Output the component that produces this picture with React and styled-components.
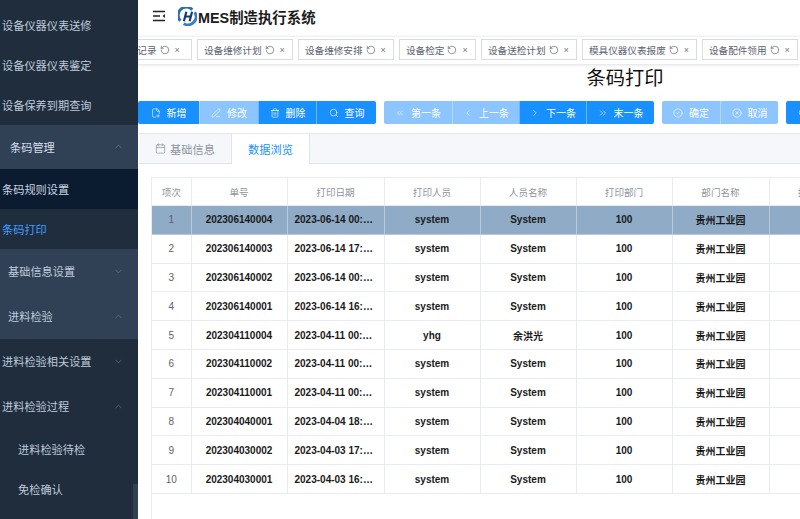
import React from "react";
import styled, { createGlobalStyle } from "styled-components";
import {
  FilePlus2, PenLine, Trash2, Search, ChevronsLeft, ChevronLeft, ChevronRight, ChevronsRight,
  CircleCheck, CircleX, RotateCw, ChevronUp, ChevronDown, Calendar,
} from "lucide-react";

const Global = createGlobalStyle`
  html, body { margin: 0; padding: 0; width: 800px; height: 519px; overflow: hidden; background: #fff; }
  * { box-sizing: border-box; }
  body { font-family: "Liberation Sans", "Noto Sans CJK SC", sans-serif; }
`;

const Page = styled.div`
  display: flex;
  width: 800px;
  height: 519px;
  overflow: hidden;
`;

const Sidebar = styled.aside`
  position: relative;
  flex: 0 0 138px;
  padding-top: 5px;
  background: #1f2d3d;
  overflow: hidden;
`;

const MenuItem = styled.div`
  display: flex;
  align-items: center;
  justify-content: space-between;
  height: ${(p) => p.$h || 40}px;
  padding: 0 14px 1px ${(p) => p.$indent || 2}px;
  font-size: 11.2px;
  color: ${(p) => p.$color || "#bfcbd9"};
  background: ${(p) => p.$bg || "transparent"};
  white-space: nowrap;
  svg { color: #7f8b9a; }
`;

const ScrollThumb = styled.div`
  position: absolute;
  right: 0;
  top: 484px;
  width: 5px;
  height: 35px;
  background: #33404f;
`;

const Main = styled.main`
  flex: 1;
  min-width: 0;
  display: flex;
  flex-direction: column;
  overflow: hidden;
`;

const Header = styled.header`
  flex: 0 0 36px;
  display: flex;
  align-items: center;
  padding: 0 0 4px 14px;
  background: #fff;
`;

const Brand = styled.div`
  display: flex;
  align-items: center;
  margin-left: 12px;
  gap: 1px;
  font-size: 14.4px;
  font-weight: 700;
  color: #1c1c1c;
`;

const TagBar = styled.div`
  flex: 0 0 28px;
  display: flex;
  justify-content: flex-end;
  align-items: flex-start;
  gap: 5px;
  padding: 2px 2px 0 0;
  overflow: hidden;
  background: #fff;
  border-top: 1px solid #f0f1f4;
  box-shadow: 0 1px 3px rgba(0, 21, 41, 0.14);
  position: relative;
`;

const Tag = styled.div`
  flex: 0 0 ${(p) => p.$w}px;
  height: 21px;
  display: flex;
  align-items: center;
  gap: 3px;
  padding-left: 6px;
  border: 1px solid #d8dce5;
  font-size: 9.6px;
  color: #5a6270;
  white-space: nowrap;
  svg { color: #555; }
  small { font-size: 9px; color: #777; margin-left: 2px; }
`;

const Canvas = styled.div`
  width: 974px;
  flex: 1;
  min-height: 0;
  display: flex;
  flex-direction: column;
`;

const Title = styled.h1`
  margin: 0;
  height: 37px;
  padding-top: 1px;
  text-align: center;
  font-size: 19.3px;
  line-height: 28px;
  font-weight: 400;
  color: #111;
`;

const Toolbar = styled.div`
  display: flex;
  height: 23px;
  gap: 8px;
`;

const Group = styled.div`
  display: flex;
  border-radius: 2px;
  overflow: hidden;
`;

const Btn = styled.div`
  flex: 0 0 ${(p) => p.$w}px;
  display: flex;
  align-items: center;
  justify-content: center;
  gap: 6px;
  font-size: 10px;
  color: #fff;
  background: ${(p) => (p.$off ? "#8cc5ff" : "#1890ff")};
  border-left: 1px solid rgba(255, 255, 255, 0.35);
  white-space: nowrap;
  &:first-child { border-left: none; }
`;

const Tabs = styled.div`
  margin: 9px 0 0 1px;
  display: flex;
  height: 31px;
  background: #f5f7fa;
  border-top: 1px solid #e4e7ed;
  border-bottom: 1px solid #dfe4ed;
`;

const TabItem = styled.div`
  flex: 0 0 ${(p) => p.$w}px;
  display: flex;
  align-items: center;
  justify-content: center;
  gap: 4px;
  font-size: 11.2px;
  color: ${(p) => (p.$active ? "#1890ff" : "#8f959e")};
  background: ${(p) => (p.$active ? "#fff" : "transparent")};
  height: ${(p) => (p.$active ? "30px" : "auto")};
  border-right: ${(p) => (p.$active ? "1px solid #dfe4ed" : "none")};
  border-left: ${(p) => (p.$active ? "1px solid #dfe4ed" : "none")};
`;

const TableWrap = styled.div`
  margin: 13px 0 0 13px;
  border-left: 1px solid #e8ebf0;
  flex: 1;
`;

const Table = styled.table`
  border-collapse: collapse;
  table-layout: fixed;
  width: 713px;
  font-size: 10px;
`;

const Th = styled.th`
  height: 28px;
  border: 1px solid #e8ebf0;
  border-left: ${(p) => (p.$first ? "none" : "1px solid #e8ebf0")};
  font-weight: 400;
  font-size: 9.6px;
  color: #8f959e;
  text-align: center;
  padding: 0;
  white-space: nowrap;
  overflow: hidden;
`;

const Row = styled.tr`
  background: ${(p) => (p.$selected ? "#8fabc6" : "#fff")};
`;

const Td = styled.td`
  height: 28.8px;
  border: 1px solid ${(p) => (p.$selected ? "#b9cadb" : "#e8ebf0")};
  border-left: ${(p) => (p.$first ? "none" : undefined)};
  font-weight: ${(p) => (p.$plain ? 400 : 700)};
  color: ${(p) => (p.$plain ? "#606266" : "#1a1a1a")};
  text-align: center;
  padding: 0 7px;
  white-space: nowrap;
  overflow: hidden;
  text-overflow: ellipsis;
`;

const Hamburger = () => (
  <svg width="14" height="12" viewBox="0 0 14 12" fill="none" stroke="#222" strokeWidth="1.3">
    <path d="M1 1.5h12M1 6h7M1 10.5h12" />
    <path d="M13 4L10.5 6 13 8" fill="#222" stroke="none" />
  </svg>
);

const Logo = () => (
  <svg width="19" height="19" viewBox="0 0 20 20">
    <path d="M2.5 14.5A8.5 8.5 0 0 1 15 2.8" fill="none" stroke="#2a6fb5" strokeWidth="3" />
    <path d="M17.5 5.5A8.5 8.5 0 0 1 6 17.5" fill="none" stroke="#2f7fc4" strokeWidth="3" />
    <path d="M2 16C8 15 14 10 18 3" fill="none" stroke="#fff" strokeWidth="1.2" />
    <path d="M8.8 5L6.2 15M14.8 5l-2.6 10M7 10h6.8" fill="none" stroke="#163a6c" strokeWidth="2.3" />
  </svg>
);

const menu = [
  { t: "设备仪器仪表送修" },
  { t: "设备仪器仪表鉴定" },
  { t: "设备保养到期查询" },
  { t: "条码管理", h: 44, indent: 10, bg: "#304156", arrow: "up", color: "#d5deea" },
  { t: "条码规则设置", bg: "#0b1c30", color: "#c9d4e0" },
  { t: "条码打印", bg: "#1f2d3d", color: "#409eff" },
  { t: "基础信息设置", h: 45, indent: 8, bg: "#304156", arrow: "down" },
  { t: "进料检验", h: 45, indent: 8, bg: "#304156", arrow: "up" },
  { t: "进料检验相关设置", h: 45, arrow: "down" },
  { t: "进料检验过程", h: 45, arrow: "up" },
  { t: "进料检验待检", indent: 18 },
  { t: "免检确认", indent: 18 },
];

const tags = [
  ["设备保养记录", 100], ["设备维修计划", 96], ["设备维修安排", 96], ["设备检定", 77],
  ["设备送检计划", 96], ["模具仪器仪表报废", 115], ["设备配件领用", 96],
];

const rows = [
  ["202306140004", "2023-06-14 00:12:30", "system", "System"],
  ["202306140003", "2023-06-14 17:20:11", "system", "System"],
  ["202306140002", "2023-06-14 00:10:42", "system", "System"],
  ["202306140001", "2023-06-14 16:43:05", "system", "System"],
  ["202304110004", "2023-04-11 00:21:16", "yhg", "余洪光"],
  ["202304110002", "2023-04-11 00:18:37", "system", "System"],
  ["202304110001", "2023-04-11 00:15:09", "system", "System"],
  ["202304040001", "2023-04-04 18:30:52", "system", "System"],
  ["202304030002", "2023-04-03 17:11:24", "system", "System"],
  ["202304030001", "2023-04-03 16:02:48", "system", "System"],
];

const cols = [
  ["项次", 39], ["单号", 96], ["打印日期", 97], ["打印人员", 96], ["人员名称", 96],
  ["打印部门", 96], ["部门名称", 97], ["打印备注", 96],
];

const groups = [
  [
    [FilePlus2, "新增", 61], [PenLine, "修改", 59, true], [Trash2, "删除", 58], [Search, "查询", 60],
  ],
  [
    [ChevronsLeft, "第一条", 68, true], [ChevronLeft, "上一条", 67, true],
    [ChevronRight, "下一条", 67], [ChevronsRight, "末一条", 68],
  ],
  [
    [CircleCheck, "确定", 58, true], [CircleX, "取消", 58, true],
  ],
  [[Search, "其他", 60]],
];

export default function App() {
  return (
    <Page>
      <Global />
      <Sidebar>
        {menu.map((m) => (
          <MenuItem key={m.t} $h={m.h} $indent={m.indent} $bg={m.bg} $color={m.color}>
            {m.t}
            {m.arrow === "up" && <ChevronUp size={11} strokeWidth={1.2} />}
            {m.arrow === "down" && <ChevronDown size={11} strokeWidth={1.2} />}
          </MenuItem>
        ))}
        <ScrollThumb />
      </Sidebar>
      <Main>
        <Header>
          <Hamburger />
          <Brand><Logo />MES制造执行系统</Brand>
        </Header>
        <TagBar>
          {tags.map(([t, w]) => (
            <Tag key={t} $w={w}>
              {t}
              <RotateCw size={10} strokeWidth={1.5} style={{ transform: "scaleX(-1)" }} />
              <small>×</small>
            </Tag>
          ))}
        </TagBar>
        <Canvas>
          <Title>条码打印</Title>
          <Toolbar>
            {groups.map((g, i) => (
              <Group key={i}>
                {g.map(([Icon, label, w, off]) => (
                  <Btn key={label} $w={w} $off={off}>
                    <Icon size={10} strokeWidth={1.5} />
                    {label}
                  </Btn>
                ))}
              </Group>
            ))}
          </Toolbar>
          <Tabs>
            <TabItem $w={92}><Calendar size={11} strokeWidth={1.5} />基础信息</TabItem>
            <TabItem $w={79} $active>数据浏览</TabItem>
          </Tabs>
          <TableWrap>
            <Table>
              <colgroup>
                {cols.map(([c, w]) => <col key={c} style={{ width: w }} />)}
              </colgroup>
              <thead>
                <tr>
                  {cols.map(([c], i) => <Th key={c} $first={i === 0}>{c}</Th>)}
                </tr>
              </thead>
              <tbody>
                {rows.map((r, i) => {
                  const sel = i === 0;
                  return (
                    <Row key={r[0]} $selected={sel}>
                      <Td $first $plain $selected={sel}>{i + 1}</Td>
                      <Td $selected={sel}>{r[0]}</Td>
                      <Td $selected={sel}>{r[1]}</Td>
                      <Td $selected={sel}>{r[2]}</Td>
                      <Td $selected={sel}>{r[3]}</Td>
                      <Td $selected={sel}>100</Td>
                      <Td $selected={sel}>贵州工业园</Td>
                      <Td $selected={sel}></Td>
                    </Row>
                  );
                })}
              </tbody>
            </Table>
          </TableWrap>
        </Canvas>
      </Main>
    </Page>
  );
}
